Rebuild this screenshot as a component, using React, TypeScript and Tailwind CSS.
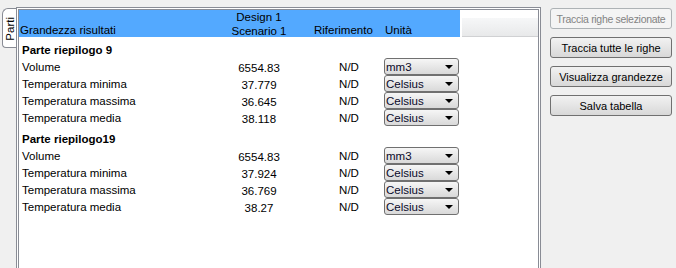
type Row = { name: string; value: string; unit: string }

const sections: { title: string; rows: Row[] }[] = [
  {
    title: 'Parte riepilogo 9',
    rows: [
      { name: 'Volume', value: '6554.83', unit: 'mm3' },
      { name: 'Temperatura minima', value: '37.779', unit: 'Celsius' },
      { name: 'Temperatura massima', value: '36.645', unit: 'Celsius' },
      { name: 'Temperatura media', value: '38.118', unit: 'Celsius' },
    ],
  },
  {
    title: 'Parte riepilogo19',
    rows: [
      { name: 'Volume', value: '6554.83', unit: 'mm3' },
      { name: 'Temperatura minima', value: '37.924', unit: 'Celsius' },
      { name: 'Temperatura massima', value: '36.769', unit: 'Celsius' },
      { name: 'Temperatura media', value: '38.27', unit: 'Celsius' },
    ],
  },
]

const buttons = [
  { label: 'Traccia righe selezionate', disabled: true },
  { label: 'Traccia tutte le righe', disabled: false },
  { label: 'Visualizza grandezze', disabled: false },
  { label: 'Salva tabella', disabled: false },
]

function UnitSelect({ unit }: { unit: string }) {
  return (
    <div className="ml-[4px] w-[75px] h-[17px] flex items-center justify-between border border-[#707070] rounded-[3px] bg-gradient-to-b from-[#f6f6f6] to-[#d9d9d9] pl-[1px] pr-[5px]">
      <span className="text-[11.5px] leading-[14px] text-[#0a0a2a]">{unit}</span>
      <span className="w-0 h-0 border-l-[4px] border-r-[4px] border-t-[4px] border-l-transparent border-r-transparent border-t-black" />
    </div>
  )
}

export default function App() {
  return (
    <div
      className="w-[676px] h-[268px] overflow-hidden bg-[#f0f0f0] flex text-black"
      style={{ fontFamily: 'Tahoma, "Liberation Sans", Arial, sans-serif' }}
    >
      {/* Vertical tab */}
      <div className="w-[16px] shrink-0 pl-[2px] pt-[8px]">
        <div className="w-[14px] h-[40px] bg-white border-l border-t border-b border-[#898c95] rounded-tl-[6px] rounded-bl-[4px] flex items-center justify-center">
          <span className="[writing-mode:vertical-rl] rotate-180 text-[11.5px] leading-[12px] mt-[2px]">Parti</span>
        </div>
      </div>

      {/* Results panel */}
      <div className="mt-[7px] w-[525px] h-[280px] shrink-0 border border-[#898c95] bg-white p-px">
        <div className="h-full border border-[#898c95] bg-white flex flex-col">
          {/* Header */}
          <div className="flex h-[27px] shrink-0">
            <div className="w-[441px] bg-[#53a9ff] flex text-[11.5px] leading-[14px]">
              <div className="w-[181px] pl-[1px] pt-[13px]">Grandezza risultati</div>
              <div className="w-[118px] flex flex-col items-center">
                <span>Design 1</span>
                <span>Scenario 1</span>
              </div>
              <div className="w-[62px] pt-[13px] -ml-[4px]">Riferimento</div>
              <div className="pt-[13px] pl-[9px]">Unità</div>
            </div>
            <div className="flex-1 flex flex-col pl-[2px]">
              <div className="h-[8px]" />
              <div className="flex-1 bg-gradient-to-b from-[#f6f7f8] to-[#e8e9ea] border-b border-[#d0d1d3]" />
            </div>
          </div>

          {/* Body */}
          <div className="flex flex-col text-[11.5px]">
            {sections.map((s) => (
              <div key={s.title} className="flex flex-col">
                <div className="h-[21px] pt-[6px] pl-[3px] leading-[15px] font-bold">{s.title}</div>
                {s.rows.map((r, i) => (
                  <div key={i} className="flex h-[17px] items-center leading-[14px]">
                    <div className="w-[181px] pl-[3px]">{r.name}</div>
                    <div className="w-[118px] text-center pt-[2px]">{r.value}</div>
                    <div className="w-[62px] text-center">N/D</div>
                    <UnitSelect unit={r.unit} />
                  </div>
                ))}
              </div>
            ))}
          </div>
        </div>
      </div>

      {/* Action buttons */}
      <div className="ml-[9px] w-[122px] shrink-0 pt-[8px] flex flex-col gap-[8px]">
        {buttons.map((b) => (
          <button
            key={b.label}
            disabled={b.disabled}
            className={
              b.disabled
                ? 'h-[21px] w-full rounded-[3px] border border-[#adb2b5] bg-[#f4f4f4] text-[#838383] text-[10.5px] tracking-[-0.3px] leading-[14px] whitespace-nowrap'
                : 'h-[21px] w-full rounded-[3px] border border-[#707070] bg-gradient-to-b from-[#f2f2f2] to-[#d8d8d8] text-black text-[11px] leading-[14px] whitespace-nowrap'
            }
          >
            {b.label}
          </button>
        ))}
      </div>
    </div>
  )
}
